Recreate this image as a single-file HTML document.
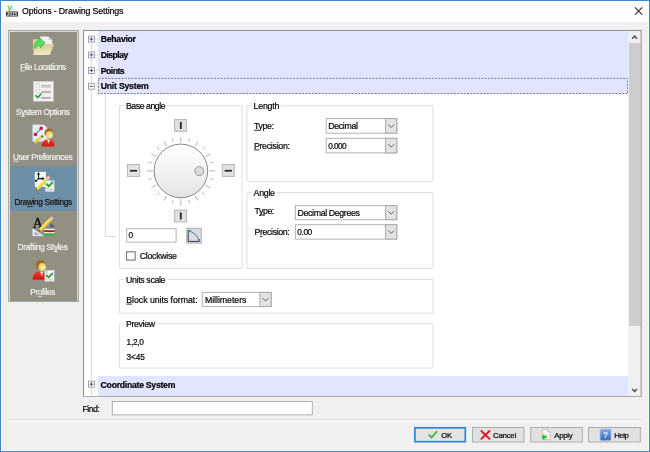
<!DOCTYPE html>
<html><head><meta charset="utf-8"><title>Options - Drawing Settings</title>
<style>
html,body{margin:0;padding:0;}
body{width:650px;height:452px;overflow:hidden;background:#f0f0f0;position:relative;font-family:"Liberation Sans",sans-serif;}
.a{position:absolute;box-sizing:border-box;}
svg{position:absolute;overflow:visible;}
</style></head><body>
<!-- window frame -->
<div class="a" style="left:0;top:0;width:650px;height:452px;border:1px solid #3b87c9;"></div>
<div class="a" style="left:1px;top:1px;width:648px;height:450px;border:1px solid rgba(255,255,255,0.6);"></div>
<div class="a" style="left:1px;top:1px;width:648px;height:21px;background:#fff;"></div>
<!-- app icon -->
<svg style="left:0;top:0;will-change:transform" width="30" height="22">
 <path d="M8 5.6L9.6 10.4L11.4 5.4" stroke="#7cc653" stroke-width="1.3" fill="none"/>
 <path d="M11.9 5.4L10.4 11.4M11.9 5.4L14.3 11.4M11 9.2H13.4" stroke="#b4d0dc" stroke-width="0.8" fill="none"/>
 <rect x="6.1" y="11.5" width="11.9" height="5.1" rx="0.8" fill="#2c2c2c"/>
 <text x="12.05" y="15.7" text-anchor="middle" font-family="'Liberation Sans',sans-serif" font-weight="700" font-size="4.6" fill="#f2f2f2" textLength="10.2" lengthAdjust="spacingAndGlyphs">2015</text>
</svg>
<!-- close X -->
<svg style="left:0;top:0" width="650" height="30"><path d="M635 7.4L642.2 14.6M642.2 7.4L635 14.6" stroke="#2a2a2a" stroke-width="1.1" fill="none"/></svg>

<!-- sidebar -->
<div class="a" style="left:8px;top:30px;width:71px;height:272px;border:1px solid #a6a6a4;background:#dbdbd9;"></div>
<div class="a" style="left:10px;top:32px;width:67px;height:268.5px;background:#929082;"></div>
<div class="a" style="left:10px;top:166px;width:67px;height:45px;background:#6d8fa6;"></div>

<!-- File Locations icon -->
<svg style="left:32px;top:36px" width="23" height="20" viewBox="0 0 23 20">
 <defs>
  <linearGradient id="ff" x1="0" y1="0" x2="0" y2="1"><stop offset="0" stop-color="#d8cb96"/><stop offset="1" stop-color="#f1e9c6"/></linearGradient>
  <linearGradient id="ga" x1="0" y1="0" x2="1" y2="1"><stop offset="0" stop-color="#3fd04a"/><stop offset="0.6" stop-color="#5fe06a"/><stop offset="1" stop-color="#2fae3c"/></linearGradient>
 </defs>
 <path d="M0.7 3.2H8.5V18.8H1.6Z" fill="#d9cd9a"/>
 <path d="M8.3 0.6H16.6L20.2 4V9H8.3Z" fill="#f3f1f6"/>
 <path d="M16.6 0.6V4H20.2Z" fill="#c9c9d0"/>
 <path d="M5.6 8.1H22.2L17.8 19.1H1.3Z" fill="url(#ff)"/>
 <path d="M2.2 11.6C2.4 7.6 4.2 4.8 7.2 3.6L6.7 1.2L13.2 6.6L8.4 12.2L8 9.4C6 9.6 4.6 10.6 3.8 12.6Z" fill="url(#ga)" stroke="#2e9e3a" stroke-width="0.4"/>
</svg>
<!-- System Options icon -->
<svg style="left:33px;top:81px" width="21" height="21" viewBox="0 0 21 21">
 <rect x="0.3" y="0.4" width="20.2" height="19.8" fill="#f2f2f2" stroke="#c9c9c6" stroke-width="0.6"/>
 <rect x="2.9" y="2.6" width="3.6" height="3.4" fill="#fff" stroke="#c4c4c4" stroke-width="0.6"/>
 <rect x="2.9" y="8.4" width="3.6" height="3.2" fill="#fff" stroke="#c4c4c4" stroke-width="0.6"/>
 <path d="M8.2 4.4H17.8M8.2 6H17.8M8.2 10.4H17.8M8.2 11.6H17.8M8.2 16.4H17.8M8.2 17.4H17.8" stroke="#a9a9a9" stroke-width="0.9"/>
 <path d="M3 14.8L4.9 16.5L7.9 13" stroke="#2fa53c" stroke-width="1.8" fill="none" stroke-linecap="round"/>
</svg>
<!-- User Preferences icon -->
<svg style="left:32px;top:124px" width="23" height="23" viewBox="0 0 23 23">
 <defs>
  <radialGradient id="hd" cx="0.6" cy="0.6" r="0.7"><stop offset="0" stop-color="#fbf7b0"/><stop offset="1" stop-color="#d9c45c"/></radialGradient>
  <linearGradient id="rb" x1="0" y1="0" x2="0" y2="1"><stop offset="0" stop-color="#f23a2a"/><stop offset="1" stop-color="#d01414"/></linearGradient>
 </defs>
 <path d="M0.6 0.7H12L15.4 4V17.4H0.6Z" fill="#e6eef8" stroke="#b9c6d6" stroke-width="0.5"/>
 <path d="M3.5 10.4L9.2 4.4" stroke="#303040" stroke-width="0.9"/>
 <circle cx="9.2" cy="4.4" r="1.8" fill="#b8234c"/><circle cx="3.5" cy="10.4" r="1.8" fill="#b8234c"/>
 <path d="M1.2 19.8L2.2 17L8.8 12L10.6 13.8L3.6 19.4Z" fill="#e6cc3a"/>
 <path d="M8.8 12L10 11L11.4 12.6L10.6 13.8Z" fill="#4a4a5a"/>
 <path d="M1.2 19.8L1.6 18.6L2.4 19.4Z" fill="#222"/>
 <circle cx="16.8" cy="8.8" r="4.3" fill="#a9681c"/>
 <ellipse cx="17.4" cy="10.8" rx="3.6" ry="3.8" fill="url(#hd)"/>
 <path d="M9.6 22.6C9.4 17.6 12.4 15.4 16.2 15.2C20.4 15.2 22.6 17.6 22.4 22.6Z" fill="url(#rb)"/>
 <path d="M15 15.4L16.6 19.8L18 15.4Z" fill="#fbeaea"/>
</svg>
<!-- Drawing Settings icon -->
<svg style="left:34px;top:171px" width="21" height="21" viewBox="0 0 21 21">
 <rect x="0.8" y="0.9" width="11.2" height="15" fill="#f6f8fb"/>
 <path d="M4.5 2.4V7.6M4.5 7.6H9.4M4.5 7.6L2 9.8" stroke="#111" stroke-width="1.1" fill="none"/>
 <path d="M4.5 1.2L6.2 3.6H2.8Z" fill="#111"/><path d="M10.6 7.6L8.2 5.9V9.3Z" fill="#111"/><circle cx="1.9" cy="9.9" r="1" fill="#111"/>
 <path d="M1.4 19.6L2.6 16.2L12.2 6.6L14.6 9L5 18.4Z" fill="#ecd230"/>
 <path d="M2.6 16.2L12.2 6.6L13 7.4L3.6 17.4Z" fill="#f8ea70"/>
 <path d="M1.4 19.6L2 17.8L3.2 19Z" fill="#222"/>
 <path d="M12.2 6.6L14.4 4.4L16.8 6.8L14.6 9Z" fill="#e8b8b0"/>
 <path d="M12.2 6.6L12.9 5.9L15.3 8.3L14.6 9Z" fill="#c9c9c9"/>
 <rect x="11.2" y="9.4" width="9" height="11.2" fill="#f4f4f4" stroke="#b4bcc4" stroke-width="0.5"/>
 <path d="M12.8 13.2L14.8 15.2L18.4 11.4" stroke="#2fa53c" stroke-width="2" fill="none" stroke-linecap="round"/>
 <rect x="12.8" y="17.6" width="1.6" height="1.6" fill="#fff" stroke="#aaa" stroke-width="0.4"/>
 <path d="M15.6 18.6H18.8" stroke="#999" stroke-width="0.8"/>
</svg>
<!-- Drafting Styles icon -->
<svg style="left:32px;top:215px;will-change:transform" width="23" height="22" viewBox="0 0 23 22">
 <text x="0.6" y="12.8" font-family="'Liberation Serif',serif" font-size="14.5" fill="#111" stroke="#111" stroke-width="0.35">A</text>
 <path d="M18 8.4h1.4v4h-1.4zM20 9.6h1.6v2.8h-1.6z" fill="#42528a"/>
 <path d="M0.6 13.2L11.8 21H0.6Z" fill="#eef0f6" stroke="#c8ccd8" stroke-width="0.4"/>
 <path d="M2.6 16.6L7.6 20H2.6Z" fill="#9aa2b4"/>
 <rect x="12" y="13.8" width="10.6" height="1.4" fill="#f4f4f4"/>
 <rect x="12" y="15.4" width="10.6" height="1.6" fill="#c01818"/>
 <rect x="12" y="17.2" width="10.6" height="1.2" fill="#f4f4f4"/>
 <rect x="12" y="18.6" width="10.6" height="2" fill="#2fb43c"/>
 <path d="M6.4 16.6L7.6 13.2L17.4 3.2L19.8 5.6L10 15.4Z" fill="#ecd230"/>
 <path d="M7.6 13.2L17.4 3.2L18.2 4L8.6 14.4Z" fill="#f8ea70"/>
 <path d="M6.4 16.6L7 14.8L8.2 16Z" fill="#222"/>
 <path d="M17.4 3.2L19.4 1.2L21.8 3.6L19.8 5.6Z" fill="#ecc4b4"/>
 <path d="M17.4 3.2L18.1 2.5L20.5 4.9L19.8 5.6Z" fill="#c9c9c9"/>
</svg>
<!-- Profiles icon -->
<svg style="left:32px;top:259px" width="23" height="23" viewBox="0 0 23 23">
 <circle cx="8.7" cy="5.8" r="4.8" fill="#a9681c"/>
 <ellipse cx="10.2" cy="7.9" rx="3.7" ry="3.9" fill="url(#hd)"/>
 <path d="M0.6 20.8C0.4 15.4 3.4 12.6 7.6 12.4C11.6 12.4 13.8 15 13.6 20.8Z" fill="url(#rb)"/>
 <path d="M8 12.6L10 17.6L11 12.8Z" fill="#fbeaea"/>
 <rect x="12.8" y="11.2" width="9.4" height="11.4" fill="#f4f4f4" stroke="#b4bcc4" stroke-width="0.5"/>
 <rect x="14.2" y="12.6" width="1.5" height="1.5" fill="#fff" stroke="#aaa" stroke-width="0.4"/>
 <path d="M14.6 16.6L16.6 18.4L20.2 14.6" stroke="#2fa53c" stroke-width="2" fill="none" stroke-linecap="round"/>
 <rect x="14.2" y="20" width="1.5" height="1.5" fill="#fff" stroke="#aaa" stroke-width="0.4"/>
 <path d="M16.8 20.9H20.4" stroke="#999" stroke-width="0.8"/>
</svg>


<!-- tree panel -->
<div class="a" style="left:83px;top:30px;width:559px;height:367px;border:1px solid;border-color:#8c8f94 #b4b4b4 #acacac #8c8f94;background:#fff;"></div>
<!-- lavender rows -->
<div class="a" style="left:98px;top:31px;width:530px;height:63px;background:#e1e5ff;"></div>
<div class="a" style="left:98px;top:376px;width:530px;height:20px;background:#e1e5ff;"></div>
<!-- focus rect on Unit System -->
<svg style="left:0;top:0" width="650" height="452"><rect x="98.4" y="78.4" width="529.2" height="15.1" fill="none" stroke="#6e7084" stroke-width="0.9" stroke-dasharray="2 1.3"/></svg>
<!-- tree dotted lines -->
<svg style="left:0;top:0" width="650" height="452">
 <g stroke="#d9d9d9" stroke-width="1" fill="none">
  <path d="M91.4 36V395.5"/>
  <path d="M105.4 94V236.5H115"/>
  <path d="M92 39.1H98M92 54.9H98M92 70.5H98M92 86.3H98M92 384.2H98"/>
 </g>
</svg>
<!-- expand boxes -->
<svg style="left:0;top:0" width="650" height="452">
 <g fill="#fdfdff" stroke="#9a9a9e" stroke-width="0.9"><rect x="88.45" y="36.15" width="5.9" height="5.9"/><rect x="88.45" y="51.95" width="5.9" height="5.9"/><rect x="88.45" y="67.55" width="5.9" height="5.9"/><rect x="88.45" y="83.35" width="5.9" height="5.9"/><rect x="88.45" y="381.25" width="5.9" height="5.9"/></g>
 <g stroke="#3a3e7c" stroke-width="0.9" fill="none"><path d="M89.60 39.1h3.6M91.4 37.30v3.6"/><path d="M89.60 54.9h3.6M91.4 53.10v3.6"/><path d="M89.60 70.5h3.6M91.4 68.70v3.6"/><path d="M89.60 86.3h3.6"/><path d="M89.60 384.2h3.6M91.4 382.40v3.6"/></g>
</svg>
<!-- scrollbar -->
<div class="a" style="left:628px;top:31px;width:13px;height:365px;background:#f0f0f0;"></div>
<div class="a" style="left:629px;top:43px;width:11.5px;height:282.5px;background:#cdcdcd;"></div>
<svg style="left:0;top:0" width="650" height="452">
 <path d="M632.2 38.7L634.6 36.1L637 38.7" stroke="#4c4c4c" stroke-width="1.5" fill="none"/>
 <path d="M632.2 388.9L634.6 391.5L637 388.9" stroke="#4c4c4c" stroke-width="1.5" fill="none"/>
 <rect x="640.4" y="30.5" width="1.4" height="366" fill="#b6b6b6"/>
</svg>

<!-- group boxes -->
<svg style="left:0;top:0" width="650" height="452">
 <g fill="none" stroke="#dfdfdf" stroke-width="1">
<path d="M124.5 105.7H119.4V268.4H242V105.7H167"/>
<path d="M252 105.7H247V181.4H433V105.7H280.6"/>
<path d="M252 192.6H247V268.4H433V192.6H276.2"/>
<path d="M124.5 279.4H119.4V313.1H433V279.4H166.8"/>
<path d="M124.5 323.8H119.4V368.1H433V323.8H156.2"/>
 </g>
</svg>

<!-- dial -->
<svg style="left:0;top:0" width="650" height="452">
 <defs>
  <linearGradient id="dg" x1="0" y1="0" x2="0" y2="1"><stop offset="0" stop-color="#fefefe"/><stop offset="0.5" stop-color="#f3f3f3"/><stop offset="1" stop-color="#e3e3e3"/></linearGradient>
 </defs>
 <g stroke="#b4b4b4" stroke-width="1"><path d="M209.30 170.90L215.10 170.90"/><path d="M210.07 163.08L213.36 162.20"/><path d="M205.50 156.70L210.52 153.80"/><path d="M202.25 149.55L204.66 147.14"/><path d="M195.10 146.30L198.00 141.28"/><path d="M188.72 141.73L189.60 138.44"/><path d="M180.90 142.50L180.90 136.70"/><path d="M173.08 141.73L172.20 138.44"/><path d="M166.70 146.30L163.80 141.28"/><path d="M159.55 149.55L157.14 147.14"/><path d="M156.30 156.70L151.28 153.80"/><path d="M151.73 163.08L148.44 162.20"/><path d="M152.50 170.90L146.70 170.90"/><path d="M151.73 178.72L148.44 179.60"/><path d="M156.30 185.10L151.28 188.00"/><path d="M159.55 192.25L157.14 194.66"/><path d="M166.70 195.50L163.80 200.52"/><path d="M173.08 200.07L172.20 203.36"/><path d="M180.90 199.30L180.90 205.10"/><path d="M188.72 200.07L189.60 203.36"/><path d="M195.10 195.50L198.00 200.52"/><path d="M202.25 192.25L204.66 194.66"/><path d="M205.50 185.10L210.52 188.00"/><path d="M210.07 178.72L213.36 179.60"/></g>
 <circle cx="180.9" cy="170.9" r="26.8" fill="url(#dg)" stroke="#7c7c7c" stroke-width="0.9"/>
 <circle cx="199.2" cy="171.1" r="4.5" fill="#dcdcdc" stroke="#8c8c8c" stroke-width="0.8"/>
 <!-- dial buttons -->
 <rect x="174.6" y="119.6" width="12.0" height="11.7" fill="#e2e2e2" stroke="#b6b6b6" stroke-width="1"/>
 <rect x="174.6" y="210.1" width="12.0" height="11.8" fill="#e2e2e2" stroke="#b6b6b6" stroke-width="1"/>
 <rect x="127.5" y="164.5" width="11.9" height="11.9" fill="#e2e2e2" stroke="#b6b6b6" stroke-width="1"/>
 <rect x="222.3" y="164.5" width="11.9" height="11.9" fill="#e2e2e2" stroke="#b6b6b6" stroke-width="1"/>
 <g fill="#262626">
  <rect x="179.9" y="121.9" width="1.8" height="7.1"/>
  <rect x="179.9" y="212.4" width="1.8" height="7.1"/>
  <rect x="129.9" y="169.9" width="7.1" height="1.7"/>
  <rect x="224.7" y="169.9" width="7.2" height="1.7"/>
 </g>
 <!-- angle input -->
 <rect x="126.7" y="228.7" width="49.4" height="13.4" fill="#fff" stroke="#b4b4b4" stroke-width="1"/>
 <rect x="186.7" y="228.3" width="14.6" height="14.8" fill="#dbdbdb" stroke="#b0b0b0" stroke-width="1"/>
 <path d="M188.2 230V241.4H199.7" stroke="#25304e" stroke-width="0.9" fill="none"/>
 <path d="M188.8 231C193.4 232 197.6 235.6 199.1 240.8" stroke="#3270d4" stroke-width="1" fill="none"/>
 <path d="M188.3 230.2l2.2 -0.4l-0.6 2z M199.5 241.2l-1.9 -1.6l2.2 -0.6z" fill="#2c66cc"/>
 <!-- checkbox -->
 <rect x="126.6" y="251.8" width="8.5" height="8.3" fill="#fff" stroke="#555" stroke-width="0.9"/>
 <!-- combos -->
 <rect x="326.2" y="118.6" width="70.6" height="14.6" fill="#fff" stroke="#b2b2b2" stroke-width="1"/><rect x="385.6" y="118.6" width="11.2" height="14.6" fill="#e3e3e3" stroke="#a9a9a9" stroke-width="1"/><path d="M388.3 124.5L391.2 127.5L394.1 124.5" fill="none" stroke="#5c5c5c" stroke-width="0.95"/>
 <rect x="326.2" y="138.3" width="70.6" height="14.6" fill="#fff" stroke="#b2b2b2" stroke-width="1"/><rect x="385.6" y="138.3" width="11.2" height="14.6" fill="#e3e3e3" stroke="#a9a9a9" stroke-width="1"/><path d="M388.3 144.2L391.2 147.2L394.1 144.2" fill="none" stroke="#5c5c5c" stroke-width="0.95"/>
 <rect x="295.4" y="205.6" width="101.4" height="14.1" fill="#fff" stroke="#b2b2b2" stroke-width="1"/><rect x="385.6" y="205.6" width="11.2" height="14.1" fill="#e3e3e3" stroke="#a9a9a9" stroke-width="1"/><path d="M388.3 211.2L391.2 214.2L394.1 211.2" fill="none" stroke="#5c5c5c" stroke-width="0.95"/>
 <rect x="295.4" y="224.7" width="101.4" height="14.4" fill="#fff" stroke="#b2b2b2" stroke-width="1"/><rect x="385.6" y="224.7" width="11.2" height="14.4" fill="#e3e3e3" stroke="#a9a9a9" stroke-width="1"/><path d="M388.3 230.5L391.2 233.5L394.1 230.5" fill="none" stroke="#5c5c5c" stroke-width="0.95"/>
 <rect x="202.3" y="292.4" width="68.9" height="14.2" fill="#fff" stroke="#b2b2b2" stroke-width="1"/><rect x="260.0" y="292.4" width="11.2" height="14.2" fill="#e3e3e3" stroke="#a9a9a9" stroke-width="1"/><path d="M262.7 298.1L265.6 301.1L268.5 298.1" fill="none" stroke="#5c5c5c" stroke-width="0.95"/>
 <!-- find -->
 <rect x="112.4" y="401.5" width="199.9" height="13.4" fill="#fff" stroke="#b0b0b0" stroke-width="1"/>
 <!-- separator -->
 <path d="M8 419.8H641.6" stroke="#d6d6d6" stroke-width="1"/>
 <path d="M8 420.8H641.6" stroke="#fcfcfc" stroke-width="1"/>
 <!-- buttons -->
 <rect x="414.9" y="427.8" width="50.4" height="13.9" fill="#e3e3e3" stroke="#2f86d9" stroke-width="1.7"/>
 <rect x="472.6" y="427.5" width="51.5" height="14.5" fill="#e1e1e1" stroke="#adadad" stroke-width="1"/>
 <rect x="530.7" y="427.5" width="51.6" height="14.5" fill="#e1e1e1" stroke="#adadad" stroke-width="1"/>
 <rect x="588.6" y="427.5" width="51.7" height="14.5" fill="#e1e1e1" stroke="#adadad" stroke-width="1"/>
</svg>
<svg style="left:0;top:0" width="650" height="452">
 <defs><linearGradient id="hb" x1="0" y1="0" x2="0" y2="1"><stop offset="0" stop-color="#7aa8e6"/><stop offset="1" stop-color="#3a6cbe"/></linearGradient></defs>
 <path d="M428.6 434.6L431.6 437.6L437 431.2" stroke="#2db52d" stroke-width="1.7" fill="none"/>
 <path d="M480.8 430.5L490 439.4M490 430.5L480.8 439.4" stroke="#e0141e" stroke-width="1.8" fill="none"/>
 <path d="M542.6 429.2H547.4L550 431.8V439.6H542.6Z" fill="#fafafa" stroke="#aaa" stroke-width="0.6"/>
 <path d="M547.4 429.2V431.8H550" fill="#ddd" stroke="#aaa" stroke-width="0.5"/>
 <path d="M541.2 437L544.2 433.8V435.6H546.8V438.4H544.2V440.2Z" fill="#3cba42"/>
 <rect x="600.2" y="429.2" width="10.8" height="11.2" rx="1.2" fill="url(#hb)" stroke="#8fb4e6" stroke-width="0.6"/>
 <text x="605.6" y="438.2" text-anchor="middle" font-family="'Liberation Sans',sans-serif" font-weight="700" font-size="8.4" fill="#eef3ff">?</text>
</svg>

<svg style="left:0;top:0;will-change:transform" width="650" height="452" font-family="'Liberation Sans',sans-serif" fill="#000" stroke="#000" stroke-width="0.2">
<text x="22.0" y="14.4" font-size="8.8" letter-spacing="-0.127">Options - Drawing Settings</text>
<text x="100.8" y="42.3" font-size="8.7" letter-spacing="-0.290" font-weight="700">Behavior</text>
<text x="100.8" y="58.0" font-size="8.7" letter-spacing="-0.575" font-weight="700">Display</text>
<text x="100.8" y="73.6" font-size="8.7" letter-spacing="-0.557" font-weight="700">Points</text>
<text x="100.7" y="89.4" font-size="8.7" letter-spacing="-0.218" font-weight="700">Unit System</text>
<text x="100.6" y="387.6" font-size="8.7" letter-spacing="-0.274" font-weight="700">Coordinate System</text>
<text x="125.9" y="108.7" font-size="8.8" letter-spacing="-0.471">Base angle</text>
<text x="253.6" y="108.8" font-size="8.8" letter-spacing="-0.223">Length</text>
<text x="253.6" y="195.8" font-size="8.8" letter-spacing="-0.277">Angle</text>
<text x="126.0" y="282.5" font-size="8.8" letter-spacing="-0.354">Units scale</text>
<text x="126.0" y="327.0" font-size="8.8" letter-spacing="-0.383">Preview</text>
<text x="253.9" y="128.8" font-size="8.8" letter-spacing="-0.356">Type:</text>
<text x="253.9" y="148.5" font-size="8.8" letter-spacing="-0.282">Precision:</text>
<text x="328.2" y="128.8" font-size="8.8" letter-spacing="-0.331">Decimal</text>
<text x="328.2" y="148.5" font-size="8.3" letter-spacing="-0.593">0.000</text>
<text x="254.5" y="213.6" font-size="8.8" letter-spacing="-0.431">Type:</text>
<text x="254.5" y="235.0" font-size="8.8" letter-spacing="-0.371">Precision:</text>
<text x="297.6" y="215.7" font-size="8.8" letter-spacing="-0.371">Decimal Degrees</text>
<text x="297.3" y="234.8" font-size="8.3" letter-spacing="-0.418">0.00</text>
<text x="128.6" y="238.3" font-size="8.3">0</text>
<text x="139.7" y="259.1" font-size="8.8" letter-spacing="-0.289">Clockwise</text>
<text x="126.3" y="302.7" font-size="8.8" letter-spacing="-0.060">Block units format:</text>
<text x="204.9" y="302.6" font-size="8.8" letter-spacing="-0.045">Millimeters</text>
<text x="126.6" y="345.0" font-size="8.3" letter-spacing="-0.265">1,2,0</text>
<text x="126.6" y="359.7" font-size="8.3" letter-spacing="-0.098">3&lt;45</text>
<text x="82.6" y="411.7" font-size="8.8" letter-spacing="-0.641">Find:</text>
<text x="441.3" y="438.0" font-size="7.6" letter-spacing="-0.181">OK</text>
<text x="493.0" y="438.0" font-size="7.9" letter-spacing="-0.278">Cancel</text>
<text x="554.2" y="438.0" font-size="7.9" letter-spacing="-0.315">Apply</text>
<text x="614.2" y="438.0" font-size="7.9" letter-spacing="-0.483">Help</text>
<text x="20.2" y="69.6" font-size="8.2" letter-spacing="-0.346" fill="#f4f4f0" stroke="#f4f4f0">File Locations</text>
<text x="16.0" y="114.7" font-size="8.2" letter-spacing="-0.298" fill="#f4f4f0" stroke="#f4f4f0">System Options</text>
<text x="13.1" y="159.8" font-size="8.2" letter-spacing="-0.287" fill="#f4f4f0" stroke="#f4f4f0">User Preferences</text>
<text x="14.6" y="205.2" font-size="8.2" letter-spacing="-0.286" fill="#101010" stroke="#101010">Drawing Settings</text>
<text x="17.5" y="250.2" font-size="8.2" letter-spacing="-0.209" fill="#f4f4f0" stroke="#f4f4f0">Drafting Styles</text>
<text x="30.3" y="295.3" font-size="8.2" letter-spacing="-0.320" fill="#f4f4f0" stroke="#f4f4f0">Profiles</text>
<path d="M253.9 130.2H258.9" stroke="#000" stroke-width="0.8"/>
<path d="M253.9 149.9H259.5" stroke="#000" stroke-width="0.8"/>
<path d="M259.4 215.0H263.4" stroke="#000" stroke-width="0.8"/>
<path d="M260.0 236.4H262.6" stroke="#000" stroke-width="0.8"/>
<path d="M126.3 304.1H132.1" stroke="#000" stroke-width="0.8"/>
<path d="M20.2 71.0H24.9" stroke="#f4f4f0" stroke-width="0.8"/>
<path d="M21.2 116.1H25.0" stroke="#f4f4f0" stroke-width="0.8"/>
<path d="M13.1 161.2H18.7" stroke="#f4f4f0" stroke-width="0.8"/>
<path d="M27.0 206.6H32.6" stroke="#101010" stroke-width="0.8"/>
<path d="M53.9 251.6H57.8" stroke="#f4f4f0" stroke-width="0.8"/>
<path d="M37.9 296.7H42.1" stroke="#f4f4f0" stroke-width="0.8"/>
</svg>
</body></html>
